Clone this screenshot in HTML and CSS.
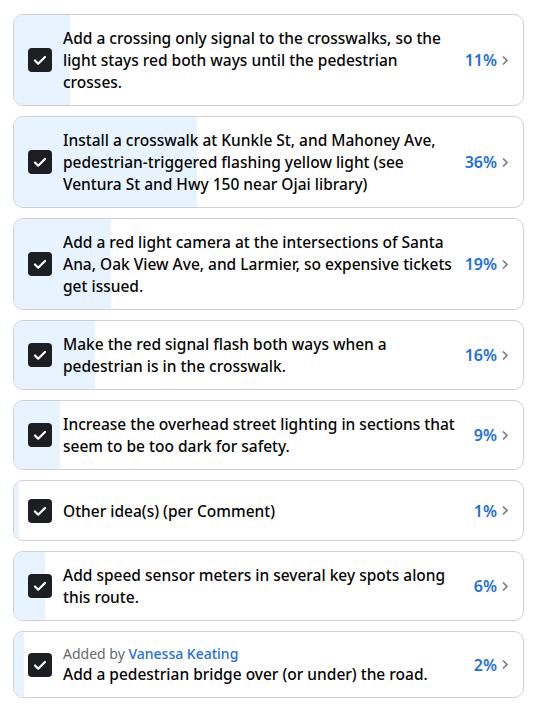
FILE: index.html
```html
<!DOCTYPE html>
<html lang="en">
<head>
  <meta charset="UTF-8">
  <title>Poll Options</title>
  <link rel="stylesheet" href="styles.css">
</head>
<body>

  <div class="poll">
    <div class="option">
      <div class="fill" style="width: 11%"></div>
      <span class="check"><svg viewBox="0 0 24 24"><path d="M7 12.5l3.2 3.2L17 9"/></svg></span>
      <div class="text">Add a crossing only signal to the crosswalks, so the light stays red both ways until the pedestrian crosses.</div>
      <span class="pct">11%</span>
      <svg class="chev" viewBox="0 0 8 12"><path d="M2 2l4 4-4 4"/></svg>
    </div>

    <div class="option">
      <div class="fill" style="width: 36%"></div>
      <span class="check"><svg viewBox="0 0 24 24"><path d="M7 12.5l3.2 3.2L17 9"/></svg></span>
      <div class="text">Install a crosswalk at Kunkle St, and Mahoney Ave, pedestrian-triggered flashing yellow light (see Ventura St and Hwy 150 near Ojai library)</div>
      <span class="pct">36%</span>
      <svg class="chev" viewBox="0 0 8 12"><path d="M2 2l4 4-4 4"/></svg>
    </div>

    <div class="option">
      <div class="fill" style="width: 19%"></div>
      <span class="check"><svg viewBox="0 0 24 24"><path d="M7 12.5l3.2 3.2L17 9"/></svg></span>
      <div class="text">Add a red light camera at the intersections of Santa Ana, Oak View Ave, and Larmier, so expensive tickets get issued.</div>
      <span class="pct">19%</span>
      <svg class="chev" viewBox="0 0 8 12"><path d="M2 2l4 4-4 4"/></svg>
    </div>

    <div class="option">
      <div class="fill" style="width: 16%"></div>
      <span class="check"><svg viewBox="0 0 24 24"><path d="M7 12.5l3.2 3.2L17 9"/></svg></span>
      <div class="text">Make the red signal flash both ways when a pedestrian is in the crosswalk.</div>
      <span class="pct">16%</span>
      <svg class="chev" viewBox="0 0 8 12"><path d="M2 2l4 4-4 4"/></svg>
    </div>

    <div class="option">
      <div class="fill" style="width: 9%"></div>
      <span class="check"><svg viewBox="0 0 24 24"><path d="M7 12.5l3.2 3.2L17 9"/></svg></span>
      <div class="text">Increase the overhead street lighting in sections that seem to be too dark for safety.</div>
      <span class="pct">9%</span>
      <svg class="chev" viewBox="0 0 8 12"><path d="M2 2l4 4-4 4"/></svg>
    </div>

    <div class="option">
      <div class="fill" style="width: 1%"></div>
      <span class="check"><svg viewBox="0 0 24 24"><path d="M7 12.5l3.2 3.2L17 9"/></svg></span>
      <div class="text">Other idea(s) (per Comment)</div>
      <span class="pct">1%</span>
      <svg class="chev" viewBox="0 0 8 12"><path d="M2 2l4 4-4 4"/></svg>
    </div>

    <div class="option">
      <div class="fill" style="width: 6%"></div>
      <span class="check"><svg viewBox="0 0 24 24"><path d="M7 12.5l3.2 3.2L17 9"/></svg></span>
      <div class="text">Add speed sensor meters in several key spots along this route.</div>
      <span class="pct">6%</span>
      <svg class="chev" viewBox="0 0 8 12"><path d="M2 2l4 4-4 4"/></svg>
    </div>

    <div class="option">
      <div class="fill" style="width: 2%"></div>
      <span class="check"><svg viewBox="0 0 24 24"><path d="M7 12.5l3.2 3.2L17 9"/></svg></span>
      <div class="text">
        <div class="added">Added by <a href="#">Vanessa Keating</a></div>
        Add a pedestrian bridge over (or under) the road.
      </div>
      <span class="pct">2%</span>
      <svg class="chev" viewBox="0 0 8 12"><path d="M2 2l4 4-4 4"/></svg>
    </div>
  </div>

</body>
</html>
```

FILE: styles.css
```css
body {
  margin: 0;
  background-color: #fff;
  font-family: "Noto Sans", "Open Sans", sans-serif;
  color: #050505;
}
.poll {
  padding: 14px 9px 0 13px;
  display: flex;
  flex-direction: column;
  gap: 10px;
}
.option {
  position: relative;
  display: flex;
  align-items: center;
  min-height: 61px;
  box-sizing: border-box;
  padding: 12px 14px 12px 14px;
  border: 1px solid #ced0d4;
  border-radius: 10px;
  overflow: hidden;
  background-color: #fff;
}
.fill {
  position: absolute;
  left: 0;
  top: 0;
  bottom: 0;
  background-color: #e7f3ff;
}
.check {
  position: relative;
  flex: none;
  width: 24px;
  height: 24px;
  border-radius: 4px;
  background-color: #1c1e21;
  margin-right: 11px;
}
.check svg {
  width: 24px;
  height: 24px;
  fill: none;
  stroke: #fff;
  stroke-width: 2.2;
  stroke-linecap: round;
  stroke-linejoin: round;
}
.text {
  position: relative;
  flex: 1;
  font-size: 15.5px;
  line-height: 22px;
  font-weight: 500;
}
.added {
  font-size: 14px;
  line-height: 19px;
  font-weight: 400;
  color: #65676b;
}
.added a {
  color: #216fdb;
  text-decoration: none;
  font-weight: 500;
}
.pct {
  position: relative;
  flex: none;
  margin-left: 8px;
  font-size: 16px;
  font-weight: 600;
  color: #216fdb;
}
.chev {
  position: relative;
  flex: none;
  width: 8px;
  height: 13px;
  margin-left: 4px;
  fill: none;
  stroke: #7a7d81;
  stroke-width: 1.7;
}
```
